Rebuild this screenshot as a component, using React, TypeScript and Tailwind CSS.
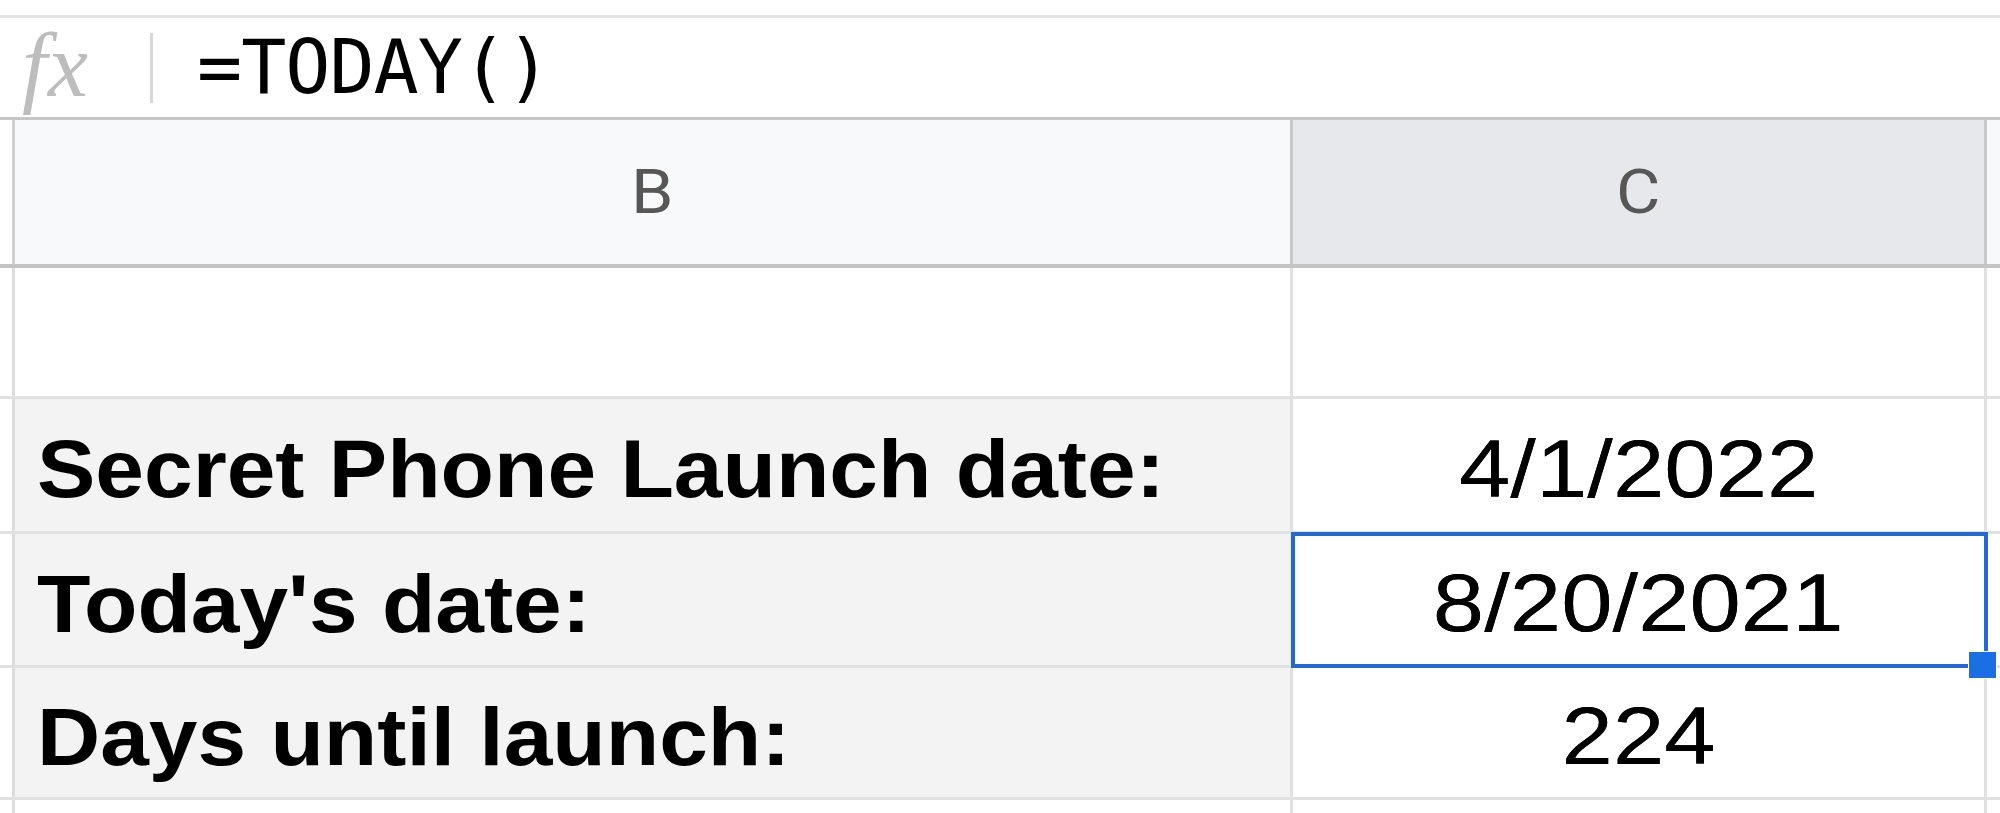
import React from "react";

const labelFont = { fontFamily: '"Liberation Sans", Arial, sans-serif' };

function HeaderRow() {
  return (
    <div className="flex h-[148px] border-b-[4px] border-[#c4c4c4] box-border">
      <div className="w-[15px] shrink-0 bg-white border-r-[3px] border-[#cfcfcf] box-border" />
      <div className="w-[1278px] shrink-0 bg-[#f8f9fa] border-r-[3px] border-[#c8c8c8] box-border flex items-center justify-center">
        <span className="inline-block scale-x-[1.1] text-[62px] leading-none text-[#575757] font-['Roboto',sans-serif]">B</span>
      </div>
      <div className="w-[694px] shrink-0 bg-[#e7e8eb] border-r-[3px] border-[#c8c8c8] box-border flex items-center justify-center">
        <span className="inline-block scale-x-[1.1] text-[62px] leading-none text-[#575757] font-['Roboto',sans-serif]">C</span>
      </div>
      <div className="flex-1 bg-[#f8f9fa]" />
    </div>
  );
}

function Row({
  h,
  label,
  value,
  selected,
}: {
  h: string;
  label?: string;
  value?: string;
  selected?: boolean;
}) {
  const labelBg = label ? "bg-[#f3f3f3]" : "bg-white";
  return (
    <div className={`flex ${h} border-b-[3px] border-[#e1e1e1] box-border`}>
      <div className="w-[15px] shrink-0 bg-white border-r-[3px] border-[#dcdcdc] box-border" />
      <div
        className={`w-[1278px] shrink-0 ${labelBg} border-r-[3px] border-[#e1e1e1] box-border flex items-center pl-[22px]`}
      >
        {label && (
          <span
            style={labelFont}
            className="inline-block origin-left scale-x-[1.08] text-[81px] leading-none font-bold text-black whitespace-nowrap pt-[9px]"
          >
            {label}
          </span>
        )}
      </div>
      <div className="relative w-[694px] shrink-0 bg-white border-r-[3px] border-[#e1e1e1] box-border flex items-center justify-center">
        {value && (
          <span
            style={labelFont}
            className="inline-block scale-x-[1.14] text-[81px] leading-none text-black whitespace-nowrap pt-[8px] [text-shadow:0_0_0.6px_#000]"
          >
            {value}
          </span>
        )}
        {selected && (
          <>
            <div className="absolute z-10 -top-[2px] -left-[2px] w-[697px] h-[136px] border-[4px] border-[#2468d6] box-border" />
            <div className="absolute z-20 top-[117px] left-[675px] w-[29px] h-[28px] bg-[#1a6fe3] border border-white box-border" />
          </>
        )}
      </div>
      <div className="flex-1 bg-white" />
    </div>
  );
}

export default function App() {
  return (
    <div className="w-[2000px] h-[813px] bg-white overflow-hidden flex flex-col">
      <div className="h-[15px] shrink-0 bg-white" />
      <div className="h-[3px] shrink-0 bg-[#e4e4e4]" />
      <div className="h-[99px] shrink-0 flex items-center bg-white">
        <div className="w-[150px] shrink-0 pl-[22px] flex items-center">
          <span className="italic text-[90px] leading-none text-[#bdbdbd] font-['Liberation_Serif',serif] -mt-[4px] tracking-[1px]">
            fx
          </span>
        </div>
        <div className="w-[3px] h-[70px] shrink-0 bg-[#d6d6d6]" />
        <span className="ml-[44px] text-[75px] leading-none text-black font-['DejaVu_Sans_Mono',monospace] tracking-[-1px]">
          =TODAY()
        </span>
      </div>
      <div className="h-[3px] shrink-0 bg-[#c6c6c6]" />
      <HeaderRow />
      <Row h="h-[131px]" />
      <Row h="h-[135px]" label="Secret Phone Launch date:" value="4/1/2022" />
      <Row h="h-[134px]" label="Today's date:" value="8/20/2021" selected />
      <Row h="h-[132px]" label="Days until launch:" value="224" />
      <div className="flex-1 flex">
        <div className="w-[15px] shrink-0 border-r-[3px] border-[#dcdcdc] box-border" />
        <div className="w-[1278px] shrink-0 border-r-[3px] border-[#e1e1e1] box-border" />
        <div className="w-[694px] shrink-0 border-r-[3px] border-[#e1e1e1] box-border" />
      </div>
    </div>
  );
}
